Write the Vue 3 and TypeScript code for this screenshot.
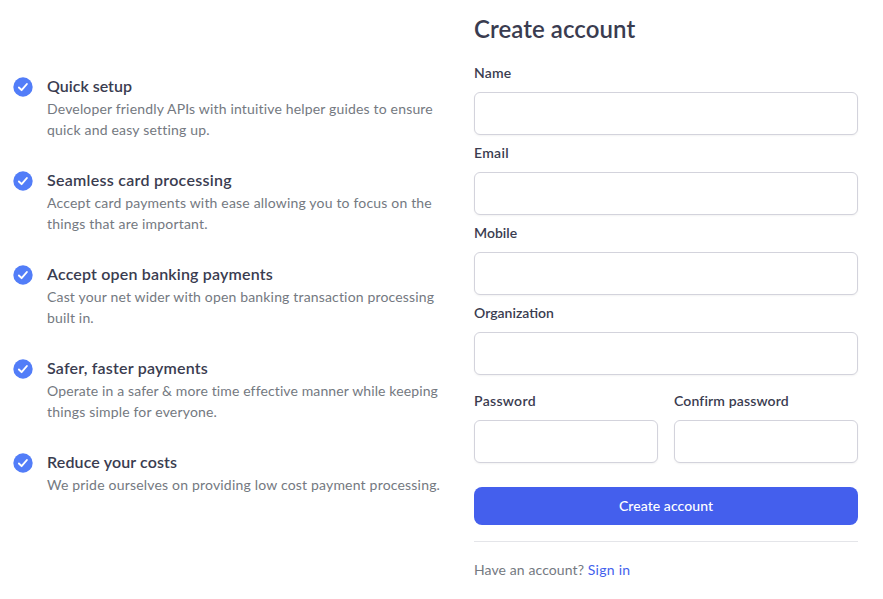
<script setup lang="ts">
interface Text {
  text: string
  track: number
}

interface Feature {
  title: Text
  lines: Text[]
}

const t = (text: string, track = 0): Text => ({ text, track })
const spacing = (item: Text) => ({ letterSpacing: `${item.track}px` })

const features: Feature[] = [
  {
    title: t('Quick setup', 0),
    lines: [
      t('Developer friendly APIs with intuitive helper guides to ensure', 0.17),
      t('quick and easy setting up.', 0.19),
    ],
  },
  {
    title: t('Seamless card processing', 0.27),
    lines: [
      t('Accept card payments with ease allowing you to focus on the', 0.18),
      t('things that are important.', 0.19),
    ],
  },
  {
    title: t('Accept open banking payments', 0.17),
    lines: [
      t('Cast your net wider with open banking transaction processing', 0.165),
      t('built in.', 0.16),
    ],
  },
  {
    title: t('Safer, faster payments', 0.2),
    lines: [
      t('Operate in a safer & more time effective manner while keeping', 0.12),
      t('things simple for everyone.', 0.18),
    ],
  },
  {
    title: t('Reduce your costs', 0.13),
    lines: [t('We pride ourselves on providing low cost payment processing.', 0.19)],
  },
]

const fields: Text[] = [t('Name', 0.2), t('Email', 0.3), t('Mobile', 0), t('Organization', 0)]
const passwords: Text[] = [t('Password', 0.3), t('Confirm password', 0.14)]
</script>

<template>
  <main class="page">
    <section class="features">
      <article v-for="f in features" :key="f.title.text" class="feature">
        <svg class="check" viewBox="0 0 20 20" aria-hidden="true">
          <circle cx="10" cy="10" r="9.7" />
          <path d="M5.9 10.5 8.6 13.2 13.9 7" />
        </svg>
        <div class="copy">
          <h2 :style="spacing(f.title)">{{ f.title.text }}</h2>
          <p v-for="l in f.lines" :key="l.text" :style="spacing(l)">{{ l.text }}</p>
        </div>
      </article>
    </section>
    <form class="signup" @submit.prevent>
      <h1>Create account</h1>
      <label v-for="n in fields" :key="n.text" class="field">
        <span :style="spacing(n)">{{ n.text }}</span>
        <input type="text" />
      </label>
      <div class="pair">
        <label v-for="n in passwords" :key="n.text" class="field">
          <span :style="spacing(n)">{{ n.text }}</span>
          <input type="password" />
        </label>
      </div>
      <button type="submit">Create account</button>
      <p class="footer">Have an account? <a>Sign in</a></p>
    </form>
  </main>
</template>

<style>
body {
  background: #fff;
}
</style>

<style scoped>
.page {
  display: flex;
  box-sizing: border-box;
  width: 883px;
  height: 599px;
  overflow: hidden;
  font-family: Lato, sans-serif;
  color: #3a3c50;
}
.features {
  display: flex;
  flex-direction: column;
  gap: 28px;
  flex: none;
  width: 474px;
  padding: 74px 0 0 13px;
  box-sizing: border-box;
}
.feature {
  display: flex;
  gap: 14px;
}
.check {
  flex: none;
  width: 20px;
  height: 20px;
  margin-top: 3px;
}
.check circle {
  fill: #527df8;
}
.check path {
  fill: none;
  stroke: #fff;
  stroke-width: 1.9;
  stroke-linecap: round;
  stroke-linejoin: round;
}
h1,
h2,
p {
  margin: 0;
}
h2 {
  font-size: 16px;
  line-height: 24px;
  font-weight: 600;
}
p {
  font-size: 14px;
  line-height: 21px;
  color: #747981;
  white-space: nowrap;
}
.signup {
  width: 384px;
  padding-top: 11px;
}
h1 {
  font-size: 24px;
  line-height: 36px;
  font-weight: 600;
  letter-spacing: 0.07px;
  margin-bottom: 15px;
}
.field {
  display: flex;
  flex-direction: column;
  align-items: flex-start;
  font-size: 14px;
  line-height: 21px;
  font-weight: 600;
  margin-bottom: 7px;
}
.field input {
  box-sizing: border-box;
  width: 100%;
  height: 43px;
  margin: 9px 0 0;
  border: 1px solid #d3d3dc;
  border-radius: 6px;
  background: #fff;
  box-shadow: 0 1px 2px rgba(0, 0, 0, 0.05);
  outline: none;
}
.pair {
  display: grid;
  grid-template-columns: 1fr 1fr;
  gap: 16px;
  padding-top: 8px;
}
button {
  display: block;
  width: 100%;
  height: 38px;
  margin-top: 17px;
  padding: 0 0 2px;
  border: 0;
  border-radius: 8px;
  background: #445fed;
  color: #fff;
  font: 500 14px/21px Lato, sans-serif;
  letter-spacing: 0.07px;
}
.footer {
  margin-top: 16px;
  padding-top: 17px;
  border-top: 1px solid #e4e5e9;
  letter-spacing: 0.1px;
}
a {
  color: #445fed;
  letter-spacing: 0.28px;
}
</style>
